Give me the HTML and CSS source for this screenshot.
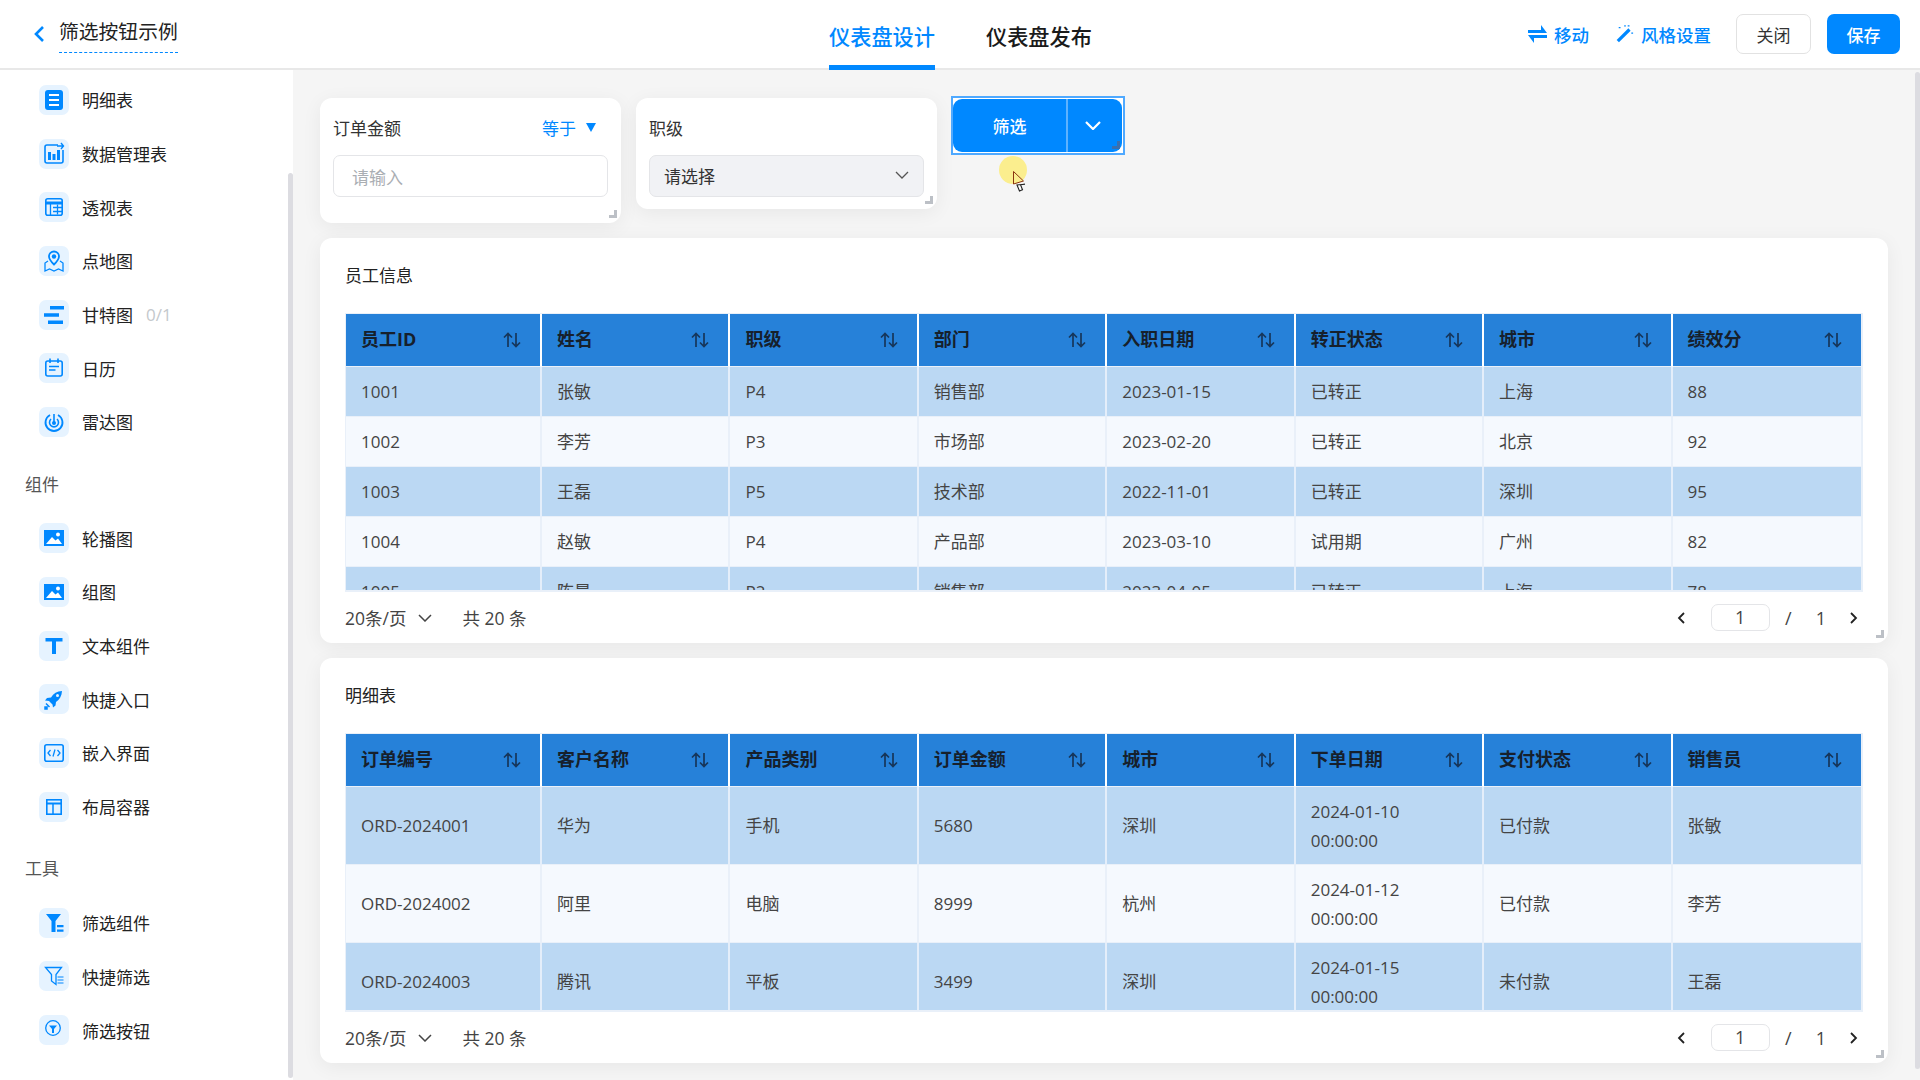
FILE: index.html
```html
<!DOCTYPE html>
<html lang="zh-CN">
<head>
  <meta charset="UTF-8" />
  <title>筛选按钮示例</title>
  <link rel="stylesheet" href="styles.css">
</head>
<body>
  <!-- Top bar -->
  <header class="topbar">
    <div class="topbar-left">
      <svg class="back-icon" viewBox="0 0 12 18"><path d="M10 2 3 9l7 7" /></svg>
      <span class="page-name">筛选按钮示例</span>
    </div>
    <nav class="tabs">
      <div class="tab active">仪表盘设计</div>
      <div class="tab">仪表盘发布</div>
    </nav>
    <div class="topbar-right">
      <a class="tool-link">
        <svg viewBox="0 0 19 18" width="19" height="18"><path d="M0 5h13V0l6 8H0zM19 10v3H6v5l-6-8z" fill="#0088ff" /></svg>
        移动
      </a>
      <a class="tool-link">
        <svg viewBox="0 0 20 20" width="18" height="18"><path d="M2 18 15 5" stroke="#0088ff" stroke-width="3.600" /><path d="M3 3h2M10 0v2M17 9h2M13 1h2" stroke="#0088ff" stroke-width="1.300" /></svg>
        风格设置
      </a>
      <button class="btn">关闭</button>
      <button class="btn btn-primary">保存</button>
    </div>
  </header>

  <div class="layout">
    <!-- Component sidebar -->
    <aside class="sidebar">
      <div class="side-item">
        <span class="tile"><svg viewBox="0 0 30 30"><rect x="6" y="5" width="18" height="20" rx="3" fill="#0088ff" /><path d="M10 10h10M10 15h10M10 20h10" stroke="#fff" stroke-width="2" /></svg></span>
        明细表
      </div>
      <div class="side-item">
        <span class="tile"><svg viewBox="0 0 30 30"><path d="M19 6H8a2 2 0 0 0-2 2v14a2 2 0 0 0 2 2h14a2 2 0 0 0 2-2V11" fill="none" stroke="#0088ff" stroke-width="1.600" /><path d="M9 13h3v8H9zM13.500 15h3v6h-3zM18 11h3v10h-3z" fill="#0088ff" /><path d="M18 7h6M22 4l2.500 3-2.500 3" fill="none" stroke="#0088ff" stroke-width="1.400" /></svg></span>
        数据管理表
      </div>
      <div class="side-item">
        <span class="tile"><svg viewBox="0 0 30 30"><rect x="6.800" y="6.800" width="16.400" height="16.400" rx="2" fill="none" stroke="#0088ff" stroke-width="1.600" /><path d="M6.800 11h16.400" stroke="#0088ff" stroke-width="3" /><path d="M11.500 12v11M14 15.500h9M14 19.500h9M18.500 12.500v10" stroke="#0088ff" stroke-width="1.300" fill="none" /></svg></span>
        透视表
      </div>
      <div class="side-item">
        <span class="tile"><svg viewBox="0 0 30 30"><path d="M15 18.500c-3-3-5-5-5-8a5 5 0 0 1 10 0c0 3-2 5-5 8z" fill="none" stroke="#0088ff" stroke-width="1.800" /><circle cx="15" cy="10.500" r="2.200" fill="#0088ff" /><path d="M9 15 6 17v8l4.500-2 4.500 2 4.500-2 4.500 2v-8l-3-2" fill="none" stroke="#0088ff" stroke-width="1.300" /></svg></span>
        点地图
      </div>
      <div class="side-item">
        <span class="tile"><svg viewBox="0 0 30 30"><path d="M11 6h14v3.500H11zM5 13.200h15v3.500H5zM9 20.500h15V24H9z" fill="#0088ff" /></svg></span>
        甘特图<em class="count">0/1</em>
      </div>
      <div class="side-item">
        <span class="tile"><svg viewBox="0 0 30 30"><rect x="6.800" y="8" width="16.400" height="15" rx="2" fill="none" stroke="#0088ff" stroke-width="1.600" /><path d="M11 5.500V10M19 5.500V10" stroke="#0088ff" stroke-width="1.600" /><path d="M10 13.500h10M10 17h6.500" stroke="#0088ff" stroke-width="1.500" /></svg></span>
        日历
      </div>
      <div class="side-item">
        <span class="tile"><svg viewBox="0 0 30 30"><path d="M11 8a8.500 8.500 0 1 0 8 0" fill="none" stroke="#0088ff" stroke-width="1.800" /><path d="M12 12a4.500 4.500 0 1 0 6 0" fill="none" stroke="#0088ff" stroke-width="1.600" /><path d="M15 7v8" stroke="#0088ff" stroke-width="1.600" /><circle cx="15" cy="16" r="2" fill="#0088ff" /></svg></span>
        雷达图
      </div>

      <div class="side-group">组件</div>
      <div class="side-item">
        <span class="tile"><svg viewBox="0 0 30 30"><rect x="5" y="7" width="20" height="16" fill="#0088ff" /><path d="M7 21l6-7 3.500 3.500 2.500-2 4 5.500z" fill="#fff" /><circle cx="19" cy="11.500" r="2" fill="#fff" /></svg></span>
        轮播图
      </div>
      <div class="side-item">
        <span class="tile"><svg viewBox="0 0 30 30"><rect x="5" y="7" width="20" height="16" fill="#0088ff" /><path d="M7 21l6-7 3.500 3.500 2.500-2 4 5.500z" fill="#fff" /><circle cx="19" cy="11.500" r="2" fill="#fff" /></svg></span>
        组图
      </div>
      <div class="side-item">
        <span class="tile"><svg viewBox="0 0 30 30"><path d="M6.500 7h17v3.500h-6.500V23h-4V10.500H6.500z" fill="#0088ff" /></svg></span>
        文本组件
      </div>
      <div class="side-item">
        <span class="tile"><svg viewBox="0 0 30 30"><path d="M23 7c-5 .2-8.500 2.500-11 6.500l-4 .5-2 2.500 4 .5 3.500 3.500.5 3 2.500-2 .5-3.500c3.500-2.500 5.800-6 6-11z" fill="#0088ff" /><path d="M7 19.500l3.500 3.500M6 23h2v2H6z" stroke="#0088ff" stroke-width="1.500" fill="#0088ff" /><circle cx="18.500" cy="11.500" r="1.500" fill="#e6f3ff" /></svg></span>
        快捷入口
      </div>
      <div class="side-item">
        <span class="tile"><svg viewBox="0 0 30 30"><rect x="5.800" y="6.800" width="18.400" height="16.400" rx="2" fill="none" stroke="#0088ff" stroke-width="1.600" /><path d="M11.500 12 9 15l2.500 3M18.500 12l2.500 3-2.500 3M16 11.500l-2 7" fill="none" stroke="#0088ff" stroke-width="1.300" /></svg></span>
        嵌入界面
      </div>
      <div class="side-item">
        <span class="tile"><svg viewBox="0 0 30 30"><rect x="7.800" y="7.800" width="14.400" height="14.400" fill="none" stroke="#0088ff" stroke-width="1.600" /><path d="M7.800 11.500h14.400" stroke="#0088ff" stroke-width="2" /><path d="M14 11.500v10.500" stroke="#0088ff" stroke-width="1.500" /></svg></span>
        布局容器
      </div>

      <div class="side-group">工具</div>
      <div class="side-item">
        <span class="tile"><svg viewBox="0 0 30 30"><path d="M7 6h15l-5.500 7v11h-4V13z" fill="#0088ff" /><path d="M18 17h6.500v2.300H18zM18 21.500h6.500v2.300H18z" fill="#0088ff" /></svg></span>
        筛选组件
      </div>
      <div class="side-item">
        <span class="tile"><svg viewBox="0 0 30 30"><path d="M6.500 6.500h16l-5.500 7v10l-4.500-3.500v-6.500z" fill="none" stroke="#0088ff" stroke-width="1.300" /><path d="M18.500 16h6M18.500 19h6M18.500 22h6" stroke="#0088ff" stroke-width="1.200" /></svg></span>
        快捷筛选
      </div>
      <div class="side-item">
        <span class="tile"><svg viewBox="0 0 30 30"><circle cx="14" cy="13" r="7.300" fill="none" stroke="#0088ff" stroke-width="1.300" /><path d="M10 10.500h8l-3 3.500v4h-2v-4z" fill="#0088ff" /></svg></span>
        筛选按钮
      </div>
    </aside>
    <div class="side-thumb"></div>

    <main class="canvas">
      <!-- Filter widgets -->
      <section class="filter-row">
        <div class="filter-card tall">
          <div class="filter-label">
            <span>订单金额</span>
            <span class="operator">等于<i class="caret"></i></span>
          </div>
          <div class="field">请输入</div>
          <i class="handle"></i>
        </div>
        <div class="filter-card">
          <div class="filter-label"><span>职级</span></div>
          <div class="field select">
            请选择
            <svg class="chevron" viewBox="0 0 14 8" width="14" height="8"><path d="M1 1l6 6 6-6" /></svg>
          </div>
          <i class="handle"></i>
        </div>
        <div class="filter-action">
          <div class="action-group">
            <button class="action-main">筛选</button>
            <button class="action-more"><svg viewBox="0 0 16 9" width="16" height="9"><path d="M1 1l7 7 7-7" /></svg></button>
            <i class="handle"></i>
          </div>
        </div>
      </section>

      <!-- Employee table -->
      <section class="card">
        <h3 class="card-title">员工信息</h3>
        <div class="table-wrap">
          <table>
            <colgroup><col class="col-first" /><col /><col /><col /><col /><col /><col /><col /></colgroup>
            <thead>
              <tr>
                <th>员工ID<svg class="sort" viewBox="0 0 18 16"><path d="M5 15V1.500M1 5.500l4-4 4 4M13 1v13.500M9 10.500l4 4 4-4" /></svg></th>
                <th>姓名<svg class="sort" viewBox="0 0 18 16"><path d="M5 15V1.500M1 5.500l4-4 4 4M13 1v13.500M9 10.500l4 4 4-4" /></svg></th>
                <th>职级<svg class="sort" viewBox="0 0 18 16"><path d="M5 15V1.500M1 5.500l4-4 4 4M13 1v13.500M9 10.500l4 4 4-4" /></svg></th>
                <th>部门<svg class="sort" viewBox="0 0 18 16"><path d="M5 15V1.500M1 5.500l4-4 4 4M13 1v13.500M9 10.500l4 4 4-4" /></svg></th>
                <th>入职日期<svg class="sort" viewBox="0 0 18 16"><path d="M5 15V1.500M1 5.500l4-4 4 4M13 1v13.500M9 10.500l4 4 4-4" /></svg></th>
                <th>转正状态<svg class="sort" viewBox="0 0 18 16"><path d="M5 15V1.500M1 5.500l4-4 4 4M13 1v13.500M9 10.500l4 4 4-4" /></svg></th>
                <th>城市<svg class="sort" viewBox="0 0 18 16"><path d="M5 15V1.500M1 5.500l4-4 4 4M13 1v13.500M9 10.500l4 4 4-4" /></svg></th>
                <th>绩效分<svg class="sort" viewBox="0 0 18 16"><path d="M5 15V1.500M1 5.500l4-4 4 4M13 1v13.500M9 10.500l4 4 4-4" /></svg></th>
              </tr>
            </thead>
            <tbody>
              <tr><td>1001</td><td>张敏</td><td>P4</td><td>销售部</td><td>2023-01-15</td><td>已转正</td><td>上海</td><td>88</td></tr>
              <tr><td>1002</td><td>李芳</td><td>P3</td><td>市场部</td><td>2023-02-20</td><td>已转正</td><td>北京</td><td>92</td></tr>
              <tr><td>1003</td><td>王磊</td><td>P5</td><td>技术部</td><td>2022-11-01</td><td>已转正</td><td>深圳</td><td>95</td></tr>
              <tr><td>1004</td><td>赵敏</td><td>P4</td><td>产品部</td><td>2023-03-10</td><td>试用期</td><td>广州</td><td>82</td></tr>
              <tr><td>1005</td><td>陈晨</td><td>P2</td><td>销售部</td><td>2023-04-05</td><td>已转正</td><td>上海</td><td>78</td></tr>
            </tbody>
          </table>
        </div>
        <div class="pager">
          <span>20条/页</span>
          <svg class="pager-chevron" viewBox="0 0 14 8" width="14" height="8"><path d="M1 1l6 6 6-6" /></svg>
          <span class="total">共 20 条</span>
          <div class="pager-right">
            <svg class="page-arrow" viewBox="0 0 8 12" width="8" height="12"><path d="M7 1 2 6l5 5" /></svg>
            <div class="page-input">1</div>
            <span class="page-slash">/</span>
            <span class="page-count">1</span>
            <svg class="page-arrow" viewBox="0 0 8 12" width="8" height="12"><path d="M1 1l5 5-5 5" /></svg>
          </div>
        </div>
        <i class="handle"></i>
      </section>

      <!-- Order detail table -->
      <section class="card">
        <h3 class="card-title">明细表</h3>
        <div class="table-wrap">
          <table>
            <colgroup><col class="col-first" /><col /><col /><col /><col /><col /><col /><col /></colgroup>
            <thead>
              <tr>
                <th>订单编号<svg class="sort" viewBox="0 0 18 16"><path d="M5 15V1.500M1 5.500l4-4 4 4M13 1v13.500M9 10.500l4 4 4-4" /></svg></th>
                <th>客户名称<svg class="sort" viewBox="0 0 18 16"><path d="M5 15V1.500M1 5.500l4-4 4 4M13 1v13.500M9 10.500l4 4 4-4" /></svg></th>
                <th>产品类别<svg class="sort" viewBox="0 0 18 16"><path d="M5 15V1.500M1 5.500l4-4 4 4M13 1v13.500M9 10.500l4 4 4-4" /></svg></th>
                <th>订单金额<svg class="sort" viewBox="0 0 18 16"><path d="M5 15V1.500M1 5.500l4-4 4 4M13 1v13.500M9 10.500l4 4 4-4" /></svg></th>
                <th>城市<svg class="sort" viewBox="0 0 18 16"><path d="M5 15V1.500M1 5.500l4-4 4 4M13 1v13.500M9 10.500l4 4 4-4" /></svg></th>
                <th>下单日期<svg class="sort" viewBox="0 0 18 16"><path d="M5 15V1.500M1 5.500l4-4 4 4M13 1v13.500M9 10.500l4 4 4-4" /></svg></th>
                <th>支付状态<svg class="sort" viewBox="0 0 18 16"><path d="M5 15V1.500M1 5.500l4-4 4 4M13 1v13.500M9 10.500l4 4 4-4" /></svg></th>
                <th>销售员<svg class="sort" viewBox="0 0 18 16"><path d="M5 15V1.500M1 5.500l4-4 4 4M13 1v13.500M9 10.500l4 4 4-4" /></svg></th>
              </tr>
            </thead>
            <tbody>
              <tr><td>ORD-2024001</td><td>华为</td><td>手机</td><td>5680</td><td>深圳</td><td>2024-01-10<br>00:00:00</td><td>已付款</td><td>张敏</td></tr>
              <tr><td>ORD-2024002</td><td>阿里</td><td>电脑</td><td>8999</td><td>杭州</td><td>2024-01-12<br>00:00:00</td><td>已付款</td><td>李芳</td></tr>
              <tr><td>ORD-2024003</td><td>腾讯</td><td>平板</td><td>3499</td><td>深圳</td><td>2024-01-15<br>00:00:00</td><td>未付款</td><td>王磊</td></tr>
            </tbody>
          </table>
        </div>
        <div class="pager">
          <span>20条/页</span>
          <svg class="pager-chevron" viewBox="0 0 14 8" width="14" height="8"><path d="M1 1l6 6 6-6" /></svg>
          <span class="total">共 20 条</span>
          <div class="pager-right">
            <svg class="page-arrow" viewBox="0 0 8 12" width="8" height="12"><path d="M7 1 2 6l5 5" /></svg>
            <div class="page-input">1</div>
            <span class="page-slash">/</span>
            <span class="page-count">1</span>
            <svg class="page-arrow" viewBox="0 0 8 12" width="8" height="12"><path d="M1 1l5 5-5 5" /></svg>
          </div>
        </div>
        <i class="handle"></i>
      </section>
    </main>
    <div class="page-thumb"></div>
  </div>

  <!-- Recorded mouse pointer -->
  <div class="pointer-glow"></div>
  <svg class="pointer" viewBox="0 0 16 22" width="16" height="22">
    <path d="M4 14l2.500 6 3-1.200-2-5 4.500-.5z" fill="#fff" stroke="#222" stroke-width="1.100" />
    <path d="M.5.5v12.500l10-3z" fill="#fbee8e" stroke="#8a3410" stroke-width="1" />
  </svg>
</body>
</html>
```

FILE: styles.css
```css
* {
  box-sizing: border-box;
}
html, body {
  margin: 0;
  height: 100%;
  overflow: hidden;
}
body {
  background: #f5f5f5;
  color: #333;
  font-family: "Open Sans", "Noto Sans CJK SC", sans-serif;
  font-size: 17px;
}

/* Top bar */
.topbar {
  height: 70px;
  display: flex;
  background: #fff;
  border-bottom: 2px solid #e8e8e8;
}
.topbar-left {
  width: 829px;
  display: flex;
  align-items: flex-start;
  padding: 20px 0 0 33px;
}
.back-icon {
  width: 12px;
  height: 18px;
  margin-top: 5px;
  fill: none;
  stroke: #0088ff;
  stroke-width: 2.600;
}
.page-name {
  margin-left: 14px;
  padding-bottom: 8px;
  font-size: 19.800px;
  line-height: 24px;
  color: #222;
  border-bottom: 1px dashed #0088ff;
}
.tabs {
  display: flex;
  gap: 51px;
}
.tab {
  height: 70px;
  padding-top: 21px;
  font-size: 21.200px;
  line-height: 32px;
  font-weight: 500;
  color: #1a1a1a;
}
.tab.active {
  color: #0088ff;
  border-bottom: 5px solid #0088ff;
}
.topbar-right {
  margin-left: auto;
  padding-right: 20px;
  display: flex;
  align-items: center;
  height: 68px;
}
.tool-link {
  display: flex;
  align-items: center;
  gap: 7px;
  margin-right: 25px;
  color: #0088ff;
  font-size: 17.500px;
  font-weight: 500;
}
.tool-link:first-child {
  margin-right: 27px;
}
.btn {
  width: 75px;
  height: 40px;
  border: 1px solid #e2e2e2;
  border-radius: 7px;
  background: #fff;
  color: #333;
  font: inherit;
}
.btn-primary {
  width: 73px;
  margin-left: 16px;
  border: 0;
  background: #0088ff;
  color: #fff;
  font-weight: 500;
}

.layout {
  display: flex;
  height: 1010px;
  position: relative;
}

/* Sidebar */
.sidebar {
  width: 293px;
  flex: none;
  padding: 3px 0 0 39px;
  background: #fff;
}
.side-item {
  height: 53.700px;
  display: flex;
  align-items: center;
  color: #222;
}
.tile {
  width: 30px;
  height: 30px;
  flex: none;
  margin-right: 13px;
  border-radius: 7px;
  background: #e6f3ff;
}
.tile svg {
  display: block;
  width: 30px;
  height: 30px;
}
.count {
  margin-left: 13px;
  font-style: normal;
  color: #c4c8cc;
}
.side-group {
  margin: 26px 0 16.500px -14px;
  line-height: 20px;
  color: #555;
}
.side-thumb {
  position: absolute;
  left: 288px;
  top: 103px;
  width: 5px;
  height: 905px;
  border-radius: 3px;
  background: #dcdce1;
}
.page-thumb {
  position: absolute;
  right: 0;
  top: 2px;
  width: 5px;
  height: 997px;
  border-radius: 3px;
  background: #dcdce1;
}

/* Canvas */
.canvas {
  flex: 1;
  min-width: 0;
  padding: 28px 32px 0 27px;
}
.filter-row {
  height: 140px;
  display: flex;
  align-items: flex-start;
  gap: 15px;
}
.filter-card {
  width: 301px;
  height: 111px;
  padding: 0 13px;
  position: relative;
  border-radius: 12px;
  background: #fff;
  box-shadow: 0 4px 20px rgba(0, 0, 0, 0.06);
}
.filter-card.tall {
  height: 125px;
}
.filter-label {
  height: 57px;
  display: flex;
  justify-content: space-between;
  align-items: center;
  padding-top: 2px;
  color: #333;
}
.operator {
  display: flex;
  align-items: center;
  color: #0088ff;
  margin-right: 12px;
}
.caret {
  margin-left: 10px;
  border: 5.500px solid transparent;
  border-top: 9px solid #0088ff;
  border-bottom: 0;
}
.field {
  height: 42px;
  display: flex;
  align-items: center;
  justify-content: space-between;
  padding: 0 18px;
  border: 1px solid #e4e5e8;
  border-radius: 7px;
  color: #aaaeb3;
}
.field.select {
  padding: 0 14px 2px;
  background: #f1f2f5;
  color: #333;
}
.chevron {
  fill: none;
  stroke: #555;
  stroke-width: 1.300;
}
.filter-action {
  width: 174px;
  height: 59px;
  margin: -2px 0 0 -1px;
  padding: 1px 1px 1px 0;
  border: 2px solid #4fa9ff;
  background: #fff;
}
.action-group {
  height: 100%;
  display: flex;
  position: relative;
  border-radius: 9px;
  background: #0088ff;
}
.action-group button {
  border: 0;
  background: transparent;
  color: #fff;
  font: inherit;
  font-weight: 500;
}
.action-group .action-main {
  width: 115px;
  border-right: 2px solid #5eb2ff;
}
.action-group .action-more {
  flex: 1;
  padding: 0 5px 0 0;
}
.action-more svg {
  display: block;
  margin: 0 auto;
  fill: none;
  stroke: #fff;
  stroke-width: 2.200;
}
.handle {
  position: absolute;
  right: 4px;
  bottom: 5px;
  width: 8px;
  height: 8px;
  border-right: 3px solid #bcc0c6;
  border-bottom: 3px solid #bcc0c6;
}
.action-group .handle {
  right: 2px;
  bottom: 3px;
  border-color: #3a6fb0;
}

/* Table cards */
.card {
  height: 405px;
  margin-bottom: 15px;
  padding: 0 25px;
  position: relative;
  border-radius: 12px;
  background: #fff;
  box-shadow: 0 4px 20px rgba(0, 0, 0, 0.06);
}
.card-title {
  height: 75px;
  margin: 0;
  padding-top: 26px;
  font-size: 17px;
  line-height: 24px;
  font-weight: 400;
  color: #222;
}
.table-wrap {
  height: 279px;
  overflow: hidden;
  border: solid #e9f0f9;
  border-width: 1px 2px 2px 1px;
}
.table-wrap table {
  width: 1515px;
  table-layout: fixed;
  border-collapse: separate;
  border-spacing: 0;
}
.col-first {
  width: 196px;
}
th {
  height: 53px;
  padding: 0 17px 4px 15px;
  position: relative;
  background: #2681d9;
  color: #16202c;
  font-size: 18px;
  font-weight: 700;
  text-align: left;
  border-right: 2px solid #fff;
  border-bottom: 1px solid #e9f0f9;
}
th:last-child {
  border-right: 0;
}
.sort {
  position: absolute;
  right: 19px;
  top: 18px;
  width: 18px;
  height: 16px;
  fill: none;
  stroke: #17365a;
  stroke-width: 1.700;
}
td {
  height: 50px;
  padding: 11px 15px 9px;
  line-height: 28.500px;
  color: #444;
  border-right: 2px solid #e9f0f9;
  border-bottom: 1px solid #e9f0f9;
  background: #f5f9fe;
}
td:last-child {
  border-right: 0;
}
tbody tr:nth-child(odd) td {
  background: #bbd8f3;
  border-right-color: #e4eefa;
}

/* Pagination */
.pager {
  height: 51px;
  display: flex;
  align-items: center;
  color: #444;
  font-size: 17.500px;
}
.pager-chevron {
  margin-left: 12px;
  fill: none;
  stroke: #444;
  stroke-width: 1.500;
}
.total {
  margin-left: 30px;
}
.pager-right {
  margin-left: auto;
  display: flex;
  align-items: center;
  margin-right: 5px;
  font-size: 18px;
}
.page-arrow {
  fill: none;
  stroke: #222;
  stroke-width: 1.800;
}
.page-input {
  width: 59px;
  height: 27px;
  margin-left: 26px;
  border: 1px solid #e4e5e8;
  border-radius: 7px;
  text-align: center;
  line-height: 25px;
}
.page-slash {
  margin-left: 15.500px;
}
.page-count {
  margin-left: 24px;
  margin-right: 24px;
}

/* Pointer overlay */
.pointer-glow {
  position: absolute;
  left: 999px;
  top: 156px;
  width: 28px;
  height: 28px;
  border-radius: 50%;
  background: #fbee8e;
}
.pointer {
  position: absolute;
  left: 1013px;
  top: 171px;
}
```
